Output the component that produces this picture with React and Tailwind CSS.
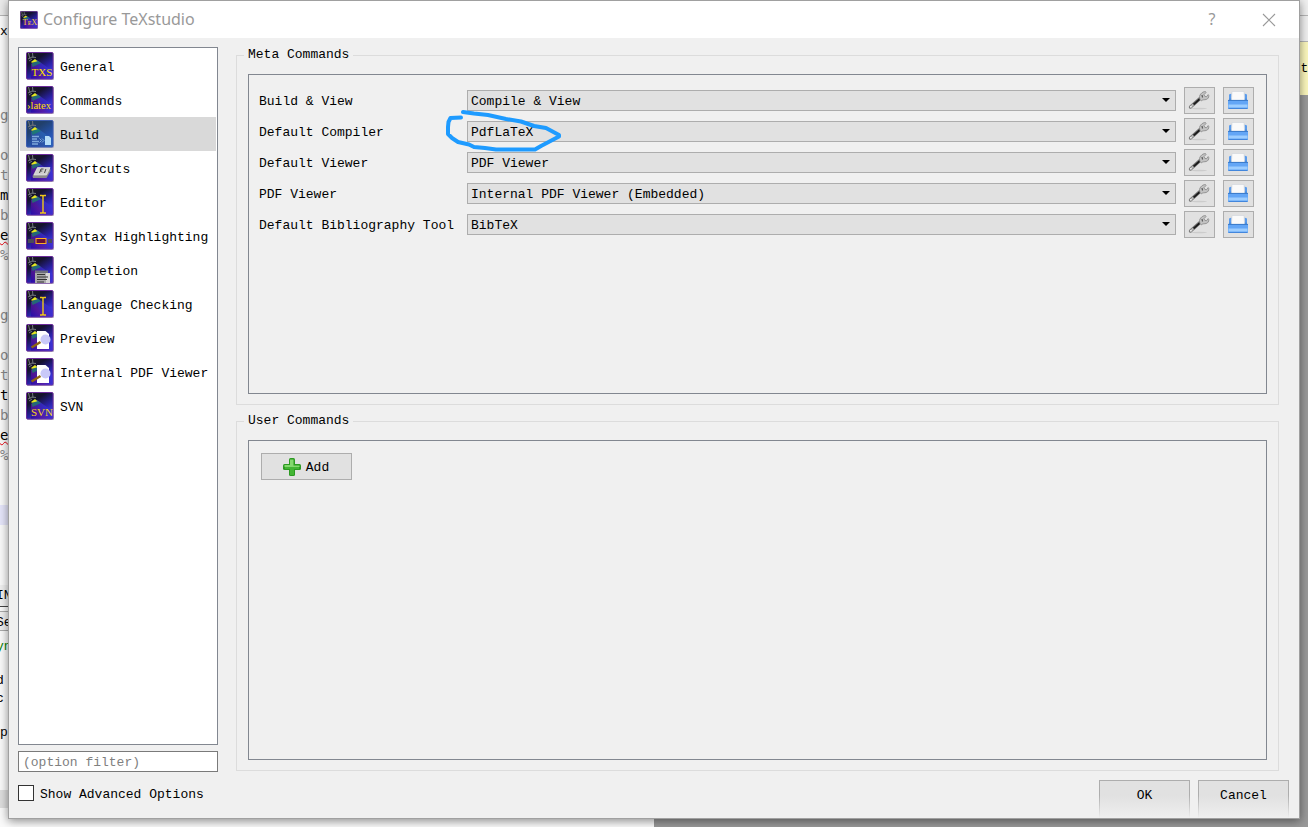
import React from "react";

const MONO = "font-['Liberation_Mono','Noto_Sans_CJK_SC',monospace]";

function Glyph({ kind }) {
  const serif = "Liberation Serif, serif";
  switch (kind) {
    case "txs":
      return <text x="5.500" y="23.500" fontSize="11" fill="#ffe000" fontFamily={serif}>TXS</text>;
    case "latex":
      return <text x="1" y="23" fontSize="10.500" fill="#ffe000" fontFamily={serif}>›latex</text>;
    case "svn":
      return <text x="5" y="23.500" fontSize="11" fill="#f2d21a" fontFamily={serif}>SVN</text>;
    case "tex":
      return <text x="4" y="22" fontSize="13" fill="#f5c542" fontFamily={serif}>TᴇX</text>;
    case "build":
      return (
        <g>
          <path d="M6 16.500h7M6 19h5M6 21.500h7M6 24h6" stroke="#7fa9dc" strokeWidth="1.500" />
          <path d="M13.500 18.500l2 2-2 2M16 18.500l2 2-2 2" stroke="#7fa8d8" fill="none" />
          <path d="M19 16h4l2 2v7h-6z" fill="#b5dcf8" />
        </g>
      );
    case "keys":
      return (
        <g>
          <path d="M11 14h13l.5 3-4 7H7l-.5-2z" fill="#8b8b8b" />
          <path d="M11.500 13.500H24l-3.500 7.500H8z" fill="#cfcfcf" stroke="#efefef" strokeWidth=".6" />
          <path d="M13.500 19l1.500-4h2.500M14.300 17h2M18.500 19l1.400-4" stroke="#444" fill="none" />
        </g>
      );
    case "cursor":
      return (
        <path d="M14 7.500h2.200l.8.800.8-.8H20M17 8v16.500M14 25h2.200l.8-.8.8.8H20" stroke="#f0c818" strokeWidth="1.400" fill="none" />
      );
    case "syntax":
      return (
        <g>
          <path d="M2 17h6v4H2zM22 17h4v4h-4z" fill="#4a4a58" />
          <rect x="10" y="16.500" width="10" height="5" fill="#6a0f35" stroke="#ffb020" />
        </g>
      );
    case "completion":
      return (
        <g>
          <path d="M9 14.500h13v3H9z" fill="#6d6f7c" />
          <path d="M9 17h15v10H9z" fill="#a9a9a9" />
          <path d="M20 17h4v10h-4z" fill="#d8d8d8" />
          <path d="M11 18.500h8M11 21h11M11 23.500h10M11 26h7" stroke="#333" />
        </g>
      );
    case "preview":
      return (
        <g>
          <path d="M11 7h8.500L23 10v15H11z" fill="#fff" />
          <path d="M5.500 23.500l9-5.500" stroke="#8d6410" strokeWidth="2.400" />
          <circle cx="19.500" cy="15.500" r="5" fill="#c9c9f8" />
        </g>
      );
    default:
      return null;
  }
}

function StageIcon({ kind, active, className }) {
  const id = "stage-" + React.useId().replace(/[^a-zA-Z0-9]/g, "");
  return (
    <svg viewBox="0 0 28 28" className={className} aria-hidden="true">
      <defs>
        <linearGradient id={id + "b"} x1=".1" y1="0" x2=".75" y2="1">
          <stop offset="0" stopColor={active ? "#24405c" : "#1c1c1e"} />
          <stop offset=".3" stopColor={active ? "#21406c" : "#15122e"} />
          <stop offset=".65" stopColor={active ? "#2450a4" : "#2a22a8"} />
          <stop offset="1" stopColor={active ? "#2b5fd0" : "#4444f8"} />
        </linearGradient>
        <linearGradient id={id + "r"} x1="0" y1="1" x2="1" y2=".2">
          <stop offset="0" stopColor={active ? "#2448a0" : "#2408a8"} />
          <stop offset=".35" stopColor={active ? "#2c50a0" : "#5a1498"} />
          <stop offset=".6" stopColor={active ? "#2860b0" : "#3a28c0"} />
          <stop offset="1" stopColor={active ? "#2a62c0" : "#3838e0"} />
        </linearGradient>
      </defs>
      <rect x="1" y="1" width="27" height="27" rx="1" fill="#b9b4c4" />
      <rect x=".5" y=".5" width="26.500" height="26.500" rx="1" fill={`url(#${id}b)`} stroke={active ? "#3c5cae" : "#6b2a9c"} />
      <path d="M5 12l6-4 15.500 11v7.500H5z" fill={`url(#${id}r)`} opacity=".8" />
      <path d="M5.500 11.500l6-3 3.500 2.500-8.500 4z" fill="#188868" opacity=".7" />
      <path d="M2.500 1l1.500 6M6.500 1l.5 5M2 7l4-2 4 .5M3 9l3-2" stroke="#70757c" fill="none" strokeWidth="1" />
      <path d="M5 10l4-3 2.500 2.200-5.500 1.600z" fill="#e4ea20" />
      <Glyph kind={kind} />
    </svg>
  );
}

function Wrench() {
  return (
    <svg viewBox="0 0 22 22" className="size-[22px]" aria-hidden="true">
      <ellipse cx="11" cy="19.500" rx="8" ry=".8" fill="#cccccc" />
      <path d="M2.500 18L12 9.500" stroke="#7a7a7a" strokeWidth="3.400" strokeLinecap="round" />
      <path d="M2.700 17.800L12 9.500" stroke="#b8b8b8" strokeWidth="1.800" strokeLinecap="round" />
      <path d="M5.500 15.500l7-6.300" stroke="#1c1c1c" strokeWidth="2" />
      <path d="M12 10.500c-.8-2-.6-4.200.8-5.600C14 3.500 15.600 2.500 17.500 2.600l.5 1-2 2 .8 1.800 1.800.2 1.600-2 .6 1c.1 1.800-.8 3.400-2.600 3.900-1.800.5-3.200-.2-4.800 1.400z" fill="#c2c2c2" stroke="#858585" strokeWidth=".8" />
      <path d="M14 6l.5 2.500" stroke="#555" strokeWidth="1.200" />
      <circle cx="2.900" cy="17.700" r=".8" fill="#fff" />
    </svg>
  );
}

function Tray() {
  return (
    <svg viewBox="0 0 22 22" className="size-[22px]" aria-hidden="true">
      <path d="M2 5.500l2.500-1v7.500H2zM20 5.500l-2.500-1v7.500H20z" fill="#5b9cec" />
      <path d="M2 9.500h18v3H2z" fill="#4c90e4" />
      <path d="M5 2.500h12l.6 9H4.400z" fill="#fafafa" stroke="#cfd3da" strokeWidth=".6" />
      <rect x="1" y="11" width="20" height="9" rx="1" fill="#63a6f6" />
      <path d="M1.500 15.500h19v3h-19z" fill="#9ccdff" />
      <path d="M1 11.400h20" stroke="#3a78c8" />
      <path d="M1.500 19.500h19" stroke="#4286dc" />
    </svg>
  );
}

function Plus() {
  return (
    <svg viewBox="0 0 20 20" className="size-5" aria-hidden="true">
      <rect x="7" y="1" width="6" height="18" rx="1.500" fill="#2c9a22" />
      <rect x="1" y="7" width="18" height="6" rx="1.500" fill="#2c9a22" />
      <path d="M8 2.500h3.500V8.500h6V10H2.500V8H8z" fill="#84d86e" />
      <path d="M8 10h4v8H8zM3 10h14v2H3z" fill="#43b534" />
    </svg>
  );
}

const pages = [
  ["General", "txs"],
  ["Commands", "latex"],
  ["Build", "build"],
  ["Shortcuts", "keys"],
  ["Editor", "cursor"],
  ["Syntax Highlighting", "syntax"],
  ["Completion", "completion"],
  ["Language Checking", "cursor"],
  ["Preview", "preview"],
  ["Internal PDF Viewer", "preview"],
  ["SVN", "svn"],
];

const commands = [
  ["Build & View", "Compile & View"],
  ["Default Compiler", "PdfLaTeX"],
  ["Default Viewer", "PDF Viewer"],
  ["PDF Viewer", "Internal PDF Viewer (Embedded)"],
  ["Default Bibliography Tool", "BibTeX"],
];

const toolButton =
  "flex h-[27px] w-[31px] items-center justify-center border border-[#adadad] bg-[#e1e1e1] pr-px pb-px";

function CommandRow({ label, value, marked }) {
  const id = React.useId();
  return (
    <div className="grid grid-cols-[200px_1fr_31px_31px] items-center gap-x-2">
      <label htmlFor={id} className="pt-0.5 whitespace-nowrap">{label}</label>
      <div className="relative">
        <select
          id={id}
          defaultValue={value}
          className="block h-[21px] w-full appearance-none border border-[#adadad] bg-[#e1e1e1] pt-0.5 pl-[3px] text-[13px] leading-4 text-black"
        >
          <option>{value}</option>
        </select>
        <svg viewBox="0 0 8 4" className="pointer-events-none absolute top-2 right-[6px] h-1 w-2" aria-hidden="true">
          <path d="M0 0h8L4 4z" fill="#000" />
        </svg>
        {marked && (
          <svg viewBox="0 0 120 48" className="pointer-events-none absolute -top-[13px] -left-[22px] h-12 w-[120px]" aria-hidden="true">
            <path
              d="M16 9.500L5.500 10L3.500 14L3 19V26L7 30L13 34L24 36.500L29 39L40 40L51 41.500H90L96 38L114 28.500V27L101 20L89 18L76 13.500L61 11L43 7L29 5.500L18 4"
              fill="none"
              stroke="#1e9bff"
              strokeWidth="4"
              strokeLinecap="round"
              strokeLinejoin="round"
            />
          </svg>
        )}
      </div>
      <button type="button" aria-label={"Configure " + label} className={toolButton}><Wrench /></button>
      <button type="button" aria-label={"Browse " + label} className={toolButton}><Tray /></button>
    </div>
  );
}

function Group({ title, children }) {
  return (
    <fieldset className="flex min-w-0 flex-1 flex-col border border-[#dcdcdc] px-[11px] pt-[11px] pb-[10px]">
      <legend className="-ml-1 px-1 leading-4">{title}</legend>
      <div className="flex-1 border border-[#828790]">{children}</div>
    </fieldset>
  );
}

const editorLines = [
  "", "", "", ["g", "g"], "", ["or", "g"], ["th", "g"], ["m", "k"], ["be", "g"], ["e", "u"], ["%", "g"],
  "", "", ["g", "g"], "", ["or", "g"], ["th", "g"], ["th", "k"], ["be", "g"], ["e", "u"], ["%", "g"],
];
const tones = {
  g: "text-[#8a8a8a]",
  k: "text-black",
  u: "text-black underline decoration-wavy decoration-red-600 decoration-1",
};

function Backdrop() {
  return (
    <div aria-hidden="true" className="absolute inset-0 flex overflow-hidden bg-[#999999]">
      <div className="flex w-1/2 flex-col overflow-hidden bg-[#fafafa]">
        <div className="h-4 border-b border-[#b5b5b5] bg-[#eaeaea]" />
        <div className="h-[29px] leading-8">x</div>
        <div className="h-[460px] font-['DejaVu_Sans_Mono',monospace] text-[14px] leading-5">
          {editorLines.map((line, i) => (
            <div key={i} className={"h-5 " + (line ? tones[line[1]] : "")}>{line ? line[0] : ""}</div>
          ))}
        </div>
        <div className="h-5 bg-[#e6e6fa]" />
        <div className="mt-[60px] h-[22px] border-b border-[#444] bg-[#f0f0f0] leading-[22px]">
          <div className="-ml-1">IN</div>
        </div>
        <div className="mt-1 h-5 border-y border-[#aaa] bg-[#f0f0f0] leading-[22px]">
          <div className="-ml-1">Se</div>
        </div>
        <div className="-ml-1 leading-8 text-[#078000]">yn</div>
        <div className="-ml-1 mt-2 leading-5">d</div>
        <div className="-ml-1 leading-4">c</div>
        <div className="mt-3.5 leading-6">p</div>
        <div className="mt-[45px] h-[18px] shrink-0 bg-[#dedede]" />
      </div>
      <div className="flex flex-1 flex-col">
        <div className="h-4 border-b border-[#b5b5b5] bg-[#f0f0f0]" />
        <div className="h-[26px] border-b border-[#b5b5b5] bg-[#f0f0f0]" />
        <div className="-mr-2 h-[53px] bg-[#fbf7bc] text-right leading-[54px]">th</div>
      </div>
    </div>
  );
}

const footerButton =
  "h-[38px] w-[91px] bg-linear-to-b from-[#adadad] from-40% to-[#efefef] px-px pt-px";
const footerFace =
  "flex h-full items-center justify-center bg-linear-to-b from-[#e1e1e1] from-40% to-[#efefef] pb-[7px]";

export default function App() {
  return (
    <div className={"relative flex min-h-screen flex-col px-2 pb-2 text-[13px] leading-4 text-black " + MONO}>
      <Backdrop />
      <main className="relative flex flex-1 flex-col border border-[#a0a0a0] bg-[#f0f0f0] shadow-[0_2px_9px_rgba(0,0,0,0.45)]">
        <header className="flex h-[37px] items-center bg-white pl-[11px] text-[#999999]">
          <StageIcon kind="tex" className="size-[18px]" />
          <h1 className="ml-[5px] pb-0.5 font-['Noto_Sans',sans-serif] text-[16px] leading-6">Configure TeXstudio</h1>
          <button type="button" aria-label="Help" className="ml-auto w-8 pb-0.5 font-['Noto_Sans',sans-serif] text-[16px] leading-6">?</button>
          <button type="button" aria-label="Close" className="mr-[14px] ml-[25px] flex w-8 justify-center">
            <svg viewBox="0 0 14 14" className="size-[14px]" aria-hidden="true">
              <path d="M1 1l12 12M13 1L1 13" stroke="#999" strokeWidth="1.100" />
            </svg>
          </button>
        </header>

        <div className="flex flex-1 gap-[18px] pt-[9px] pr-5 pl-[9px]">
          <div className="flex w-[200px] shrink-0 flex-col gap-[6px]">
            <nav className="flex-1 border border-[#828790] bg-white p-px">
              <ul>
                {pages.map(([name, kind]) => (
                  <li key={name}>
                    <a
                      href="#"
                      className={
                        "flex h-[34px] items-center gap-[6px] pl-[6px] whitespace-nowrap " +
                        (name === "Build" ? "bg-[#d9d9d9]" : "")
                      }
                    >
                      <StageIcon kind={kind} active={name === "Build"} className="size-7 shrink-0" />
                      <span className="pt-1">{name}</span>
                    </a>
                  </li>
                ))}
              </ul>
            </nav>
            <input
              type="text"
              aria-label="Option filter"
              placeholder="(option filter)"
              className="h-[21px] border border-[#7a7a7a] bg-white px-1 pt-0.5 placeholder:text-[#808080]"
            />
          </div>
          <div className="flex min-w-0 flex-1 flex-col gap-2 pb-px">
            <Group title="Meta Commands">
              <div className="flex flex-col gap-1 pt-3 pr-3 pl-[10px]">
                {commands.map(([label, value]) => (
                  <CommandRow key={label} label={label} value={value} marked={value === "PdfLaTeX"} />
                ))}
              </div>
            </Group>
            <Group title="User Commands">
              <button
                type="button"
                className="mt-3 ml-3 flex h-[27px] w-[91px] items-center justify-center gap-1 border border-[#adadad] bg-[#e1e1e1] pr-0.5"
              >
                <Plus />
                <span className="pt-0.5">Add</span>
              </button>
            </Group>
          </div>
        </div>

        <footer className="flex items-start gap-2 pt-2 pr-[10px] pl-[9px]">
          <label className="mr-auto flex h-[26px] items-center gap-[6px]">
            <input type="checkbox" className="size-4 appearance-none border border-[#333] bg-white" />
            <span className="pt-1">Show Advanced Options</span>
          </label>
          <button type="button" className={footerButton}>
            <span className={footerFace}>OK</span>
          </button>
          <button type="button" className={footerButton}>
            <span className={footerFace}>Cancel</span>
          </button>
        </footer>
      </main>
    </div>
  );
}
